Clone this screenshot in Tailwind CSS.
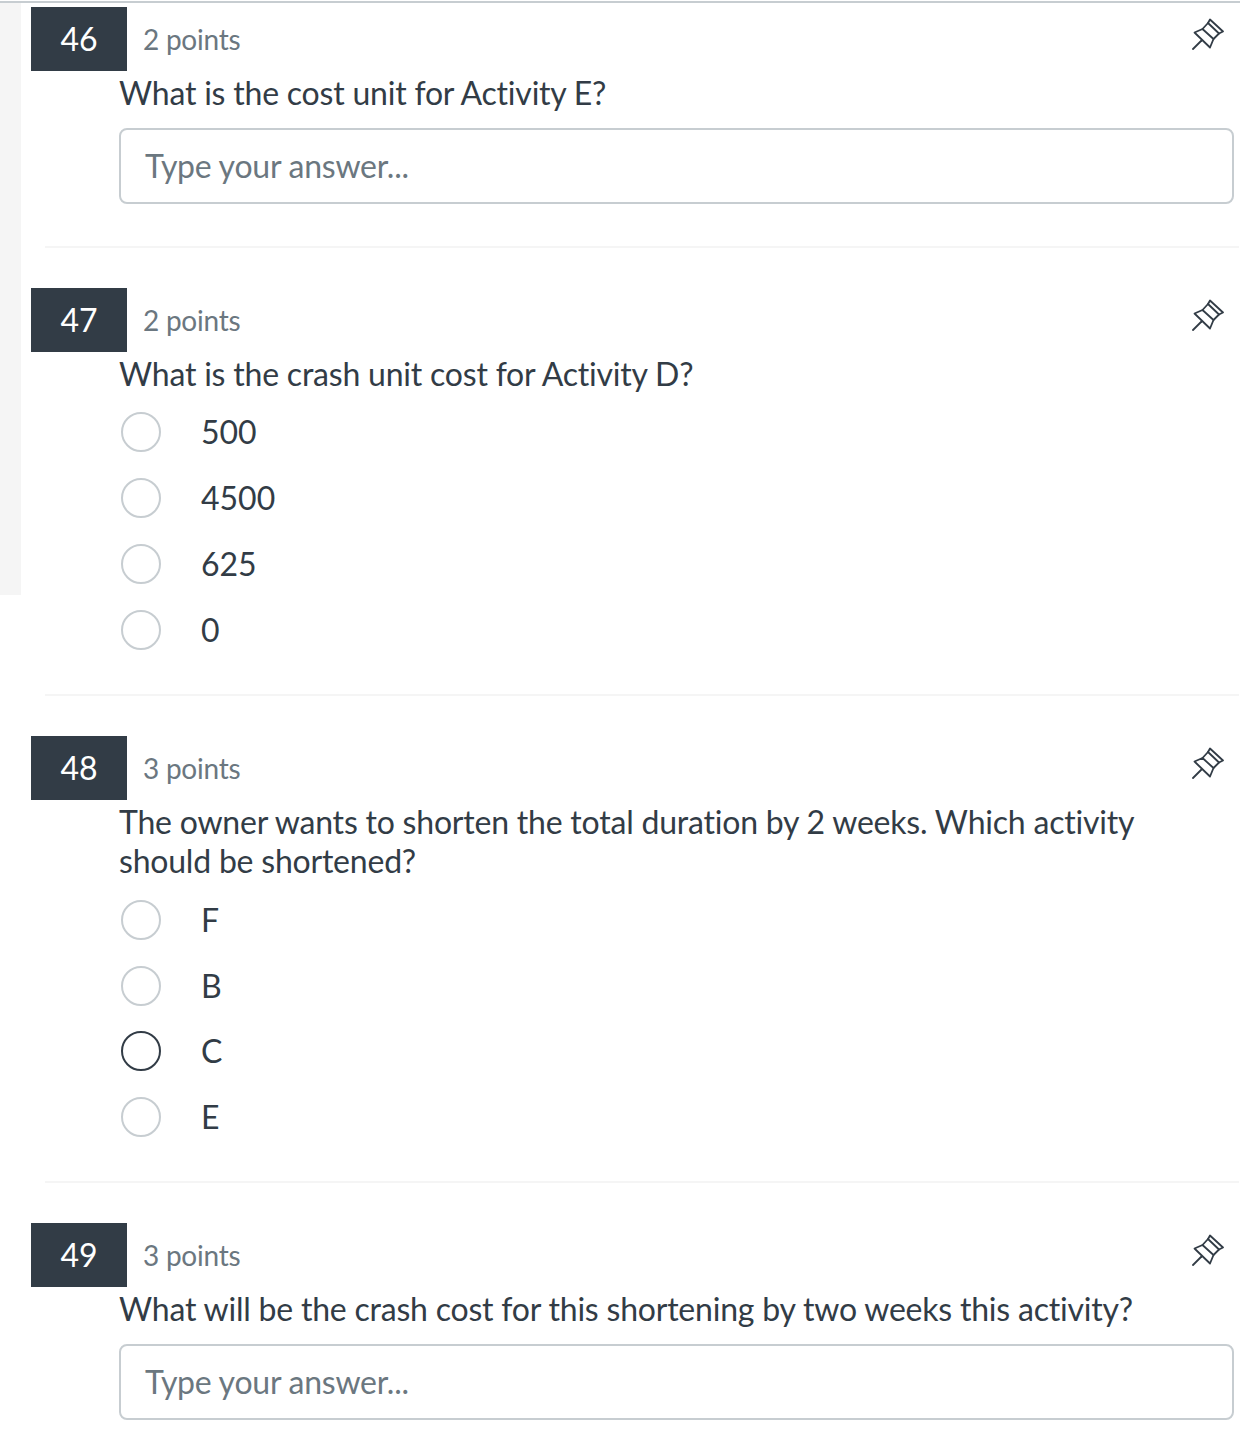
<!DOCTYPE html>
<html lang="en">
<head>
    <meta charset="UTF-8">
    <title>Quiz</title>
    <script src="https://cdn.jsdelivr.net/npm/@tailwindcss/browser@4"></script>
</head>
<body class="bg-white text-[#323c46] font-['Lato','Open_Sans',sans-serif] [font-variant-ligatures:none]">
    <div class="relative w-[1240px] h-[1456px] overflow-hidden border-t-2 border-[#c7cdd1] mt-px">
        <!-- sidebar strip on the left -->
        <div class="absolute left-0 top-0 w-[21px] h-[592px] bg-[#f5f5f5]"></div>

        <div class="pl-[31px] pt-[4px]">
            <!-- Question 46 -->
            <section class="h-[281px]">
                <div class="flex items-center h-16">
                    <div class="w-24 h-16 bg-[#323c46] text-white text-[32px] flex items-center justify-center">46</div>
                    <div class="ml-4 text-[28px] text-[#6b7780] tracking-[-0.25px]">2 points</div>
                    <svg class="ml-auto mr-[16px] mb-[10px] w-8 h-8" viewBox="0 0 32 32" fill="none" stroke="#323c46" stroke-width="1.8" stroke-linejoin="round" stroke-linecap="round">
                        <path d="M1 31 L9.5 22.5"/>
                        <path d="M2.5 14.5 L18 29.5 L21.5 21 L10.5 11 Z"/>
                        <path d="M10.5 11 L16 5 L27 15.5 L21.5 21"/>
                        <path d="M16 5 L18 1.5 L31 13.5 L27 15.5"/>
                    </svg>
                </div>
                <p class="ml-[88px] mt-[2px] text-[32px] leading-[39px] tracking-[-0.21px]">What is the cost unit for Activity E?</p>
                <div class="ml-[88px] mt-[16px] h-[76px] w-[1115px] border-2 border-[#c7cdd1] rounded-lg flex items-center pl-6 text-[32px] text-[#6b7780] tracking-[-0.25px]">Type your answer...</div>
                <div class="ml-[14px] mr-px mt-[42px] h-[2px] bg-[#f5f5f5]"></div>
            </section>

            <!-- Question 47 -->
            <section class="h-[448px]">
                <div class="flex items-center h-16">
                    <div class="w-24 h-16 bg-[#323c46] text-white text-[32px] flex items-center justify-center">47</div>
                    <div class="ml-4 text-[28px] text-[#6b7780] tracking-[-0.25px]">2 points</div>
                    <svg class="ml-auto mr-[16px] mb-[10px] w-8 h-8" viewBox="0 0 32 32" fill="none" stroke="#323c46" stroke-width="1.8" stroke-linejoin="round" stroke-linecap="round">
                        <path d="M1 31 L9.5 22.5"/>
                        <path d="M2.5 14.5 L18 29.5 L21.5 21 L10.5 11 Z"/>
                        <path d="M10.5 11 L16 5 L27 15.5 L21.5 21"/>
                        <path d="M16 5 L18 1.5 L31 13.5 L27 15.5"/>
                    </svg>
                </div>
                <p class="ml-[88px] mt-[2px] text-[32px] leading-[39px] tracking-[-0.21px]">What is the crash unit cost for Activity D?</p>
                <div class="ml-[90px] mt-[19px] flex flex-col gap-[26px] text-[32px]">
                    <label class="flex items-center h-10"><span class="w-10 h-10 rounded-full border-2 border-[#c7cdd1] mr-10"></span>500</label>
                    <label class="flex items-center h-10"><span class="w-10 h-10 rounded-full border-2 border-[#c7cdd1] mr-10"></span>4500</label>
                    <label class="flex items-center h-10"><span class="w-10 h-10 rounded-full border-2 border-[#c7cdd1] mr-10"></span>625</label>
                    <label class="flex items-center h-10"><span class="w-10 h-10 rounded-full border-2 border-[#c7cdd1] mr-10"></span>0</label>
                </div>
                <div class="ml-[14px] mr-px mt-[44px] h-[2px] bg-[#f5f5f5]"></div>
            </section>

            <!-- Question 48 -->
            <section class="h-[487px]">
                <div class="flex items-center h-16">
                    <div class="w-24 h-16 bg-[#323c46] text-white text-[32px] flex items-center justify-center">48</div>
                    <div class="ml-4 text-[28px] text-[#6b7780] tracking-[-0.25px]">3 points</div>
                    <svg class="ml-auto mr-[16px] mb-[10px] w-8 h-8" viewBox="0 0 32 32" fill="none" stroke="#323c46" stroke-width="1.8" stroke-linejoin="round" stroke-linecap="round">
                        <path d="M1 31 L9.5 22.5"/>
                        <path d="M2.5 14.5 L18 29.5 L21.5 21 L10.5 11 Z"/>
                        <path d="M10.5 11 L16 5 L27 15.5 L21.5 21"/>
                        <path d="M16 5 L18 1.5 L31 13.5 L27 15.5"/>
                    </svg>
                </div>
                <p class="ml-[88px] mt-[2px] w-[1060px] text-[32px] leading-[39px] tracking-[-0.21px]">The owner wants to shorten the total duration by 2 weeks. Which activity should be shortened?</p>
                <div class="ml-[90px] mt-[20px] flex flex-col gap-[26px] text-[32px]">
                    <label class="flex items-center h-10"><span class="w-10 h-10 rounded-full border-2 border-[#c7cdd1] mr-10"></span>F</label>
                    <label class="flex items-center h-10"><span class="w-10 h-10 rounded-full border-2 border-[#c7cdd1] mr-10"></span>B</label>
                    <label class="flex items-center h-10 -mt-px"><span class="w-10 h-10 rounded-full border-2 border-[#323c46] mr-10"></span>C</label>
                    <label class="flex items-center h-10"><span class="w-10 h-10 rounded-full border-2 border-[#c7cdd1] mr-10"></span>E</label>
                </div>
                <div class="ml-[14px] mr-px mt-[44px] h-[2px] bg-[#f5f5f5]"></div>
            </section>

            <!-- Question 49 -->
            <section>
                <div class="flex items-center h-16">
                    <div class="w-24 h-16 bg-[#323c46] text-white text-[32px] flex items-center justify-center">49</div>
                    <div class="ml-4 text-[28px] text-[#6b7780] tracking-[-0.25px]">3 points</div>
                    <svg class="ml-auto mr-[16px] mb-[10px] w-8 h-8" viewBox="0 0 32 32" fill="none" stroke="#323c46" stroke-width="1.8" stroke-linejoin="round" stroke-linecap="round">
                        <path d="M1 31 L9.5 22.5"/>
                        <path d="M2.5 14.5 L18 29.5 L21.5 21 L10.5 11 Z"/>
                        <path d="M10.5 11 L16 5 L27 15.5 L21.5 21"/>
                        <path d="M16 5 L18 1.5 L31 13.5 L27 15.5"/>
                    </svg>
                </div>
                <p class="ml-[88px] mt-[2px] text-[32px] leading-[39px] tracking-[-0.21px]">What will be the crash cost for this shortening by two weeks this activity?</p>
                <div class="ml-[88px] mt-[16px] h-[76px] w-[1115px] border-2 border-[#c7cdd1] rounded-lg flex items-center pl-6 text-[32px] text-[#6b7780] tracking-[-0.25px]">Type your answer...</div>
            </section>
        </div>
    </div>
</body>
</html>
